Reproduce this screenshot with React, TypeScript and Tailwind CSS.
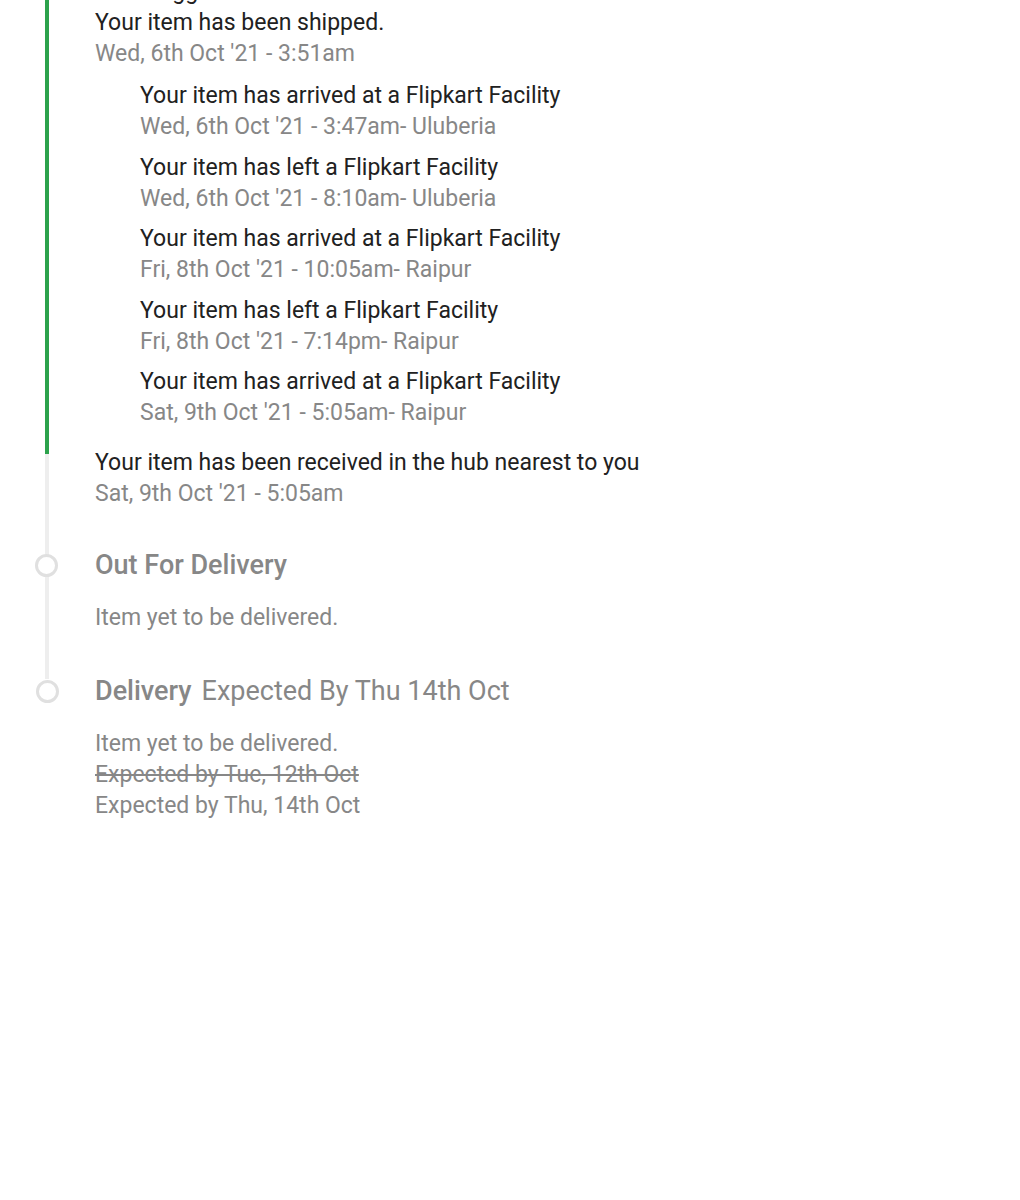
const font = { fontFamily: 'Roboto, "Noto Sans", sans-serif' }

type Step = { title: string; sub: string }

const hops: Step[] = [
  { title: 'Your item has arrived at a Flipkart Facility', sub: "Wed, 6th Oct '21 - 3:47am- Uluberia" },
  { title: 'Your item has left a Flipkart Facility', sub: "Wed, 6th Oct '21 - 8:10am- Uluberia" },
  { title: 'Your item has arrived at a Flipkart Facility', sub: "Fri, 8th Oct '21 - 10:05am- Raipur" },
  { title: 'Your item has left a Flipkart Facility', sub: "Fri, 8th Oct '21 - 7:14pm- Raipur" },
  { title: 'Your item has arrived at a Flipkart Facility', sub: "Sat, 9th Oct '21 - 5:05am- Raipur" },
]

function Circle() {
  return <div className="w-[23px] h-[23px] shrink-0 rounded-full border-[3px] border-[#e0e0e0] bg-white"></div>
}

export default function App() {
  return (
    <div className="w-[1020px] h-[1200px] overflow-hidden bg-white" style={font}>
      <div className="pl-[45px] text-[23px] leading-[31px]">
        {/* shipped - done */}
        <div className="border-l-4 border-[#2ca24c] pl-[46px] pb-[25.5px]">
          <div className="mt-[-24.5px] text-[#212121]">Item bagged at the hub</div>
          <div className="text-[#212121]">Your item has been shipped.</div>
          <div className="text-[#878787]">Wed, 6th Oct '21 - 3:51am</div>
          <div className="pl-[45px] flex flex-col gap-[9.5px] mt-[11.5px]">
            {hops.map((h, i) => (
              <div key={i}>
                <div className="text-[#212121]">{h.title}</div>
                <div className="text-[#878787]">{h.sub}</div>
              </div>
            ))}
          </div>
        </div>

        {/* pending */}
        <div className="flex flex-col border-l-4 border-[#eeeeee] pl-[46px] pb-[46px]">
          <div className="mt-[-6.5px] text-[#212121]">Your item has been received in the hub nearest to you</div>
          <div className="text-[#878787]">Sat, 9th Oct '21 - 5:05am</div>
          <div className="flex items-center ml-[-60px] mt-[40.5px]">
            <Circle />
            <div className="ml-[37px] text-[27px] font-medium text-[#878787]">Out For Delivery</div>
          </div>
          <div className="mt-[21.5px] text-[#878787]">Item yet to be delivered.</div>
        </div>

        <div className="flex items-center ml-[-9px] mt-[-3px]">
          <Circle />
          <div className="ml-[36px] text-[27px] text-[#878787]">
            <span className="font-medium">Delivery</span>
            <span className="ml-[10px]">Expected By Thu 14th Oct</span>
          </div>
        </div>
        <div className="pl-[50px] mt-[21px] text-[#878787]">
          <div>Item yet to be delivered.</div>
          <div className="line-through">Expected by Tue, 12th Oct</div>
          <div>Expected by Thu, 14th Oct</div>
        </div>
      </div>
    </div>
  )
}
